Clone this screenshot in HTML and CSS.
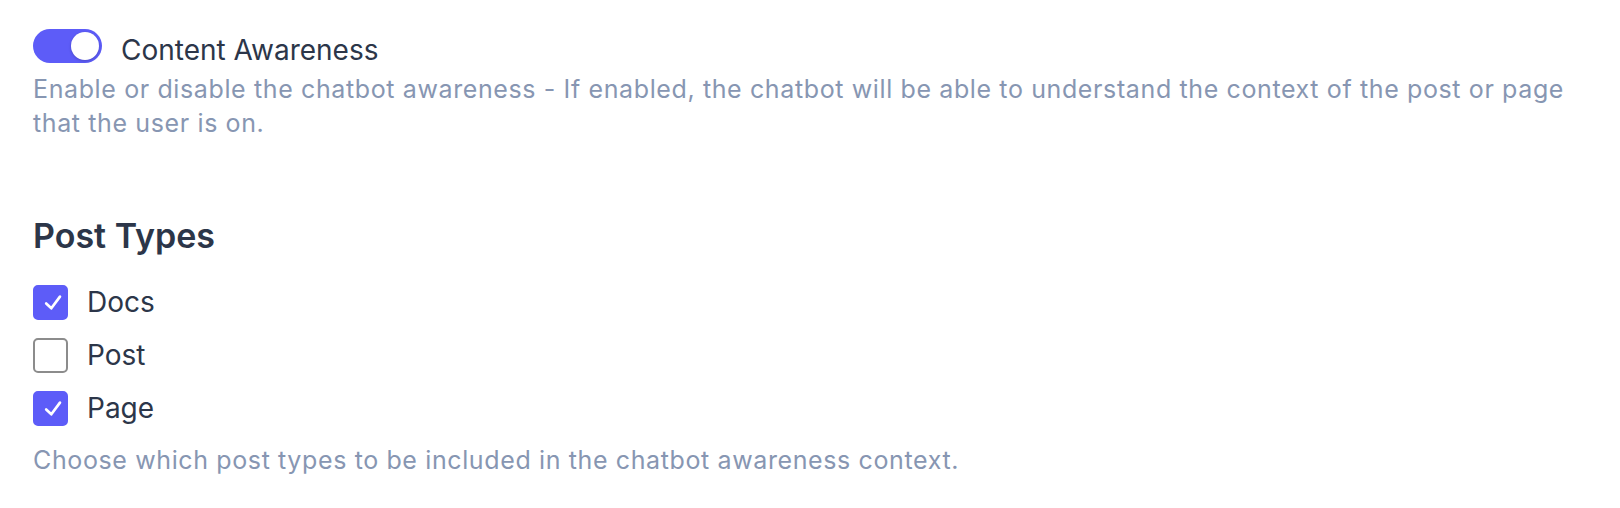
FILE: index.html
```html
<!DOCTYPE html>
<html lang="en">
<head>
<meta charset="utf-8">
<title>Chatbot settings</title>
<link rel="stylesheet" href="styles.css">
</head>
<body>
<main class="settings">
  <section class="field">
    <label class="toggle-row">
      <span class="toggle is-on"><span class="knob"></span></span>
      <span class="toggle-label">Content Awareness</span>
    </label>
    <p class="help">Enable or disable the chatbot awareness - If enabled, the chatbot will be able to understand the context of the post or page that the user is on.</p>
  </section>

  <section class="field post-types">
    <h2 class="field-title">Post Types</h2>
    <ul class="check-list">
      <li class="check-row">
        <span class="checkbox is-checked"><svg class="tick" viewBox="0 0 34 34"><path d="M12.8 18l5 4.6L26.2 11.3" fill="none" stroke="#fff" stroke-width="2.6" stroke-linecap="round" stroke-linejoin="round"/></svg></span>
        <span class="check-label">Docs</span>
      </li>
      <li class="check-row">
        <span class="checkbox"></span>
        <span class="check-label">Post</span>
      </li>
      <li class="check-row">
        <span class="checkbox is-checked"><svg class="tick" viewBox="0 0 34 34"><path d="M12.8 18l5 4.6L26.2 11.3" fill="none" stroke="#fff" stroke-width="2.6" stroke-linecap="round" stroke-linejoin="round"/></svg></span>
        <span class="check-label">Page</span>
      </li>
    </ul>
    <p class="help help-bottom">Choose which post types to be included in the chatbot awareness context.</p>
  </section>
</main>
</body>
</html>
```

FILE: styles.css
```css
* { box-sizing: border-box; }
html, body { margin: 0; padding: 0; background: #fff; }
body {
  font-family: Inter, "Noto Sans", "Liberation Sans", sans-serif;
  color: #2c3649;
}
.settings {
  padding: 29px 45px 0 33px;
  width: 1620px;
}
.field { margin: 0; }
.toggle-row {
  display: flex;
  align-items: flex-start;
  gap: 19px;
}
.toggle {
  width: 69px;
  height: 34px;
  border-radius: 17px;
  background: #5d5cf8;
  display: flex;
  align-items: center;
  justify-content: flex-end;
  padding: 0 3px;
  flex: none;
}
.knob {
  width: 28px;
  height: 28px;
  border-radius: 50%;
  background: #fff;
  box-shadow: 0 1px 3px rgba(0,0,0,0.2);
}
.toggle-label {
  margin-top: 4px;
  font-size: 28px;
  line-height: 34px;
  color: #2c3649;
}
.help {
  margin: 5px 0 0;
  font-size: 25px;
  line-height: 34px;
  letter-spacing: 0.62px;
  color: #8796b2;
}
.post-types { margin-top: 76px; }
.field-title {
  margin: 0;
  font-size: 34px;
  font-weight: 600;
  line-height: 40px;
  color: #2c3649;
}
.check-list {
  list-style: none;
  margin: 29px 0 0;
  padding: 0;
  display: flex;
  flex-direction: column;
  gap: 18px;
}
.check-row {
  display: flex;
  align-items: center;
  gap: 19px;
  height: 35px;
}
.checkbox {
  width: 35px;
  height: 35px;
  border-radius: 5px;
  border: 2px solid #8c8c8c;
  display: flex;
  align-items: center;
  justify-content: center;
  flex: none;
  overflow: hidden;
}
.checkbox.is-checked {
  background: #5d5cf8;
  border-color: #5d5cf8;
}
.tick {
  width: 35px;
  height: 35px;
  flex: none;
}
.check-label {
  font-size: 28px;
  line-height: 35px;
  color: #2c3649;
}
.help-bottom { margin-top: 17px; }
```
